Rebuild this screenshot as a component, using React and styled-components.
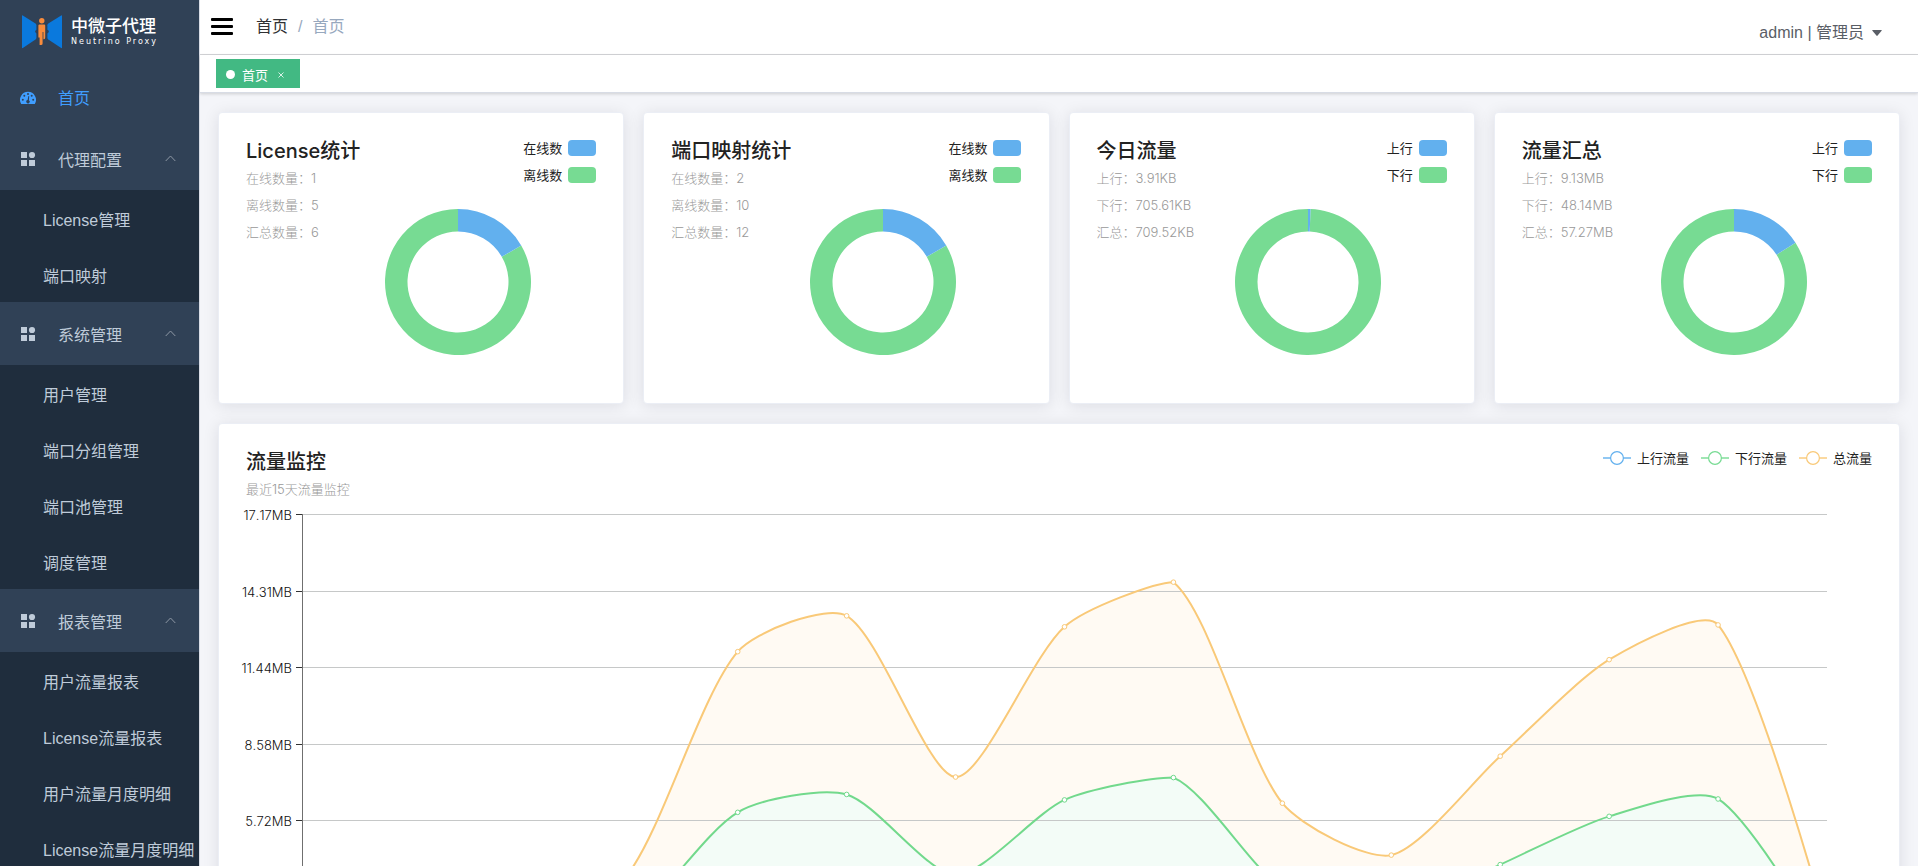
import React, { useLayoutEffect, useRef, useState } from 'react';
import styled, { createGlobalStyle } from 'styled-components';

const BLUE = '#62b0ee';
const GREEN = '#77db93';
const ORANGE = '#f9c978';

const uiFont = '"Liberation Sans", "Noto Sans CJK SC", sans-serif';
const chartFont = 'Inter, "Noto Sans CJK SC", sans-serif';

const GlobalStyle = createGlobalStyle`
  *, *::before, *::after { box-sizing: border-box; }
  body { margin: 0; font-family: ${uiFont}; font-size: 16px; background: #f4f5f9; }
  button { font: inherit; color: inherit; background: none; border: 0; padding: 0; cursor: pointer; }
  a { color: inherit; text-decoration: none; }
  ul, ol, h2, p { margin: 0; padding: 0; list-style: none; }
`;

/* ---------- shell ---------- */
const Shell = styled.div`
  display: flex;
  height: 100vh;
  overflow: hidden;
`;

const Sidebar = styled.nav`
  flex: 0 0 200px;
  overflow: hidden;
  background: #304156;
  border-right: 1px solid #d8dce5;
  color: #bfcbd9;
`;

const Main = styled.div`
  flex: 1;
  min-width: 0;
  display: flex;
  flex-direction: column;
`;

const Brand = styled.a`
  display: flex;
  align-items: center;
  gap: 9px;
  height: 64px;
  padding-left: 22px;
  color: #fff;
`;

const BrandText = styled.span`
  display: flex;
  flex-direction: column;
`;

const BrandName = styled.strong`
  font-size: 17px;
  line-height: 20px;
  font-weight: 500;
`;

const BrandSub = styled.small`
  font-family: "DejaVu Sans", sans-serif;
  font-size: 8px;
  line-height: 10px;
  letter-spacing: 2px;
  white-space: nowrap;
`;

const menuRow = `
  display: flex;
  align-items: center;
  width: 100%;
  white-space: nowrap;
  line-height: 24px;
`;

const MenuLink = styled.a`
  ${menuRow}
  height: 63px;
  padding: 6px 20px 0;
  gap: 22px;
  color: #409eff;
  svg { margin-bottom: 2px; }
`;

const MenuToggle = styled.button`
  ${menuRow}
  height: 63px;
  padding: 4px 23px 0 20px;
  gap: 22px;
  text-align: left;
  > span { flex: 1; }
  svg { margin-bottom: 4px; }
`;

const SubMenu = styled.ul`
  background: #1f2d3d;
`;

const SubLink = styled.a`
  ${menuRow}
  height: 56px;
  padding: 6px 0 0 43px;
`;

/* ---------- top bars ---------- */
const TopBar = styled.header`
  display: flex;
  align-items: center;
  flex: 0 0 55px;
  padding: 0 36px 0 11px;
  background: #fff;
  border-bottom: 1px solid #d4d5d8;
`;

const Hamburger = styled.button`
  display: flex;
  flex-direction: column;
  gap: 4px;
  width: 22px;
  margin-right: 23px;
  padding-bottom: 2px;
  > i { height: 3px; border-radius: 1px; background: #000; }
`;

const Crumbs = styled.ol`
  display: flex;
  gap: 10px;
  flex: 1;
  line-height: 24px;
  color: #97a8be;
  a { color: #303133; }
`;

const UserMenu = styled.button`
  display: flex;
  align-items: center;
  gap: 8px;
  padding-top: 12px;
  line-height: 24px;
  color: #5a5e66;
`;

const TagBar = styled.div`
  display: flex;
  align-items: center;
  flex: 0 0 38px;
  padding-left: 16px;
  background: #fff;
  border-bottom: 1px solid #d8dce5;
  box-shadow: 0 1px 3px rgba(0, 0, 0, 0.16);
  z-index: 1;
`;

const Tag = styled.div`
  display: flex;
  align-items: center;
  height: 29px;
  padding: 2px 16px 0 10px;
  background: #42b983;
  color: #fff;
  font-size: 13px;
  &::before {
    content: '';
    width: 9px;
    height: 9px;
    margin-right: 7px;
    border-radius: 50%;
    background: #fff;
  }
`;

const TagClose = styled.button`
  display: flex;
  margin-left: 10px;
`;

/* ---------- content ---------- */
const Content = styled.main`
  flex: 1;
  min-height: 0;
  overflow-y: auto;
  scrollbar-width: none;
  display: flex;
  flex-direction: column;
  gap: 19px;
  padding: 19px 18px;
`;

const CardGrid = styled.div`
  display: grid;
  grid-template-columns: repeat(4, minmax(0, 1fr));
  gap: 19px;
`;

const Card = styled.section`
  background: #fff;
  border: 1px solid #ebeef5;
  border-radius: 4px;
  box-shadow: 0 2px 16px rgba(20, 20, 40, 0.1);
  font-family: ${chartFont};
`;

const StatCard = styled(Card)`
  display: grid;
  grid-template-columns: minmax(0, 138fr) 146px minmax(0, 65fr);
  align-items: start;
  padding: 27px 27px 48px;
`;

const StatText = styled.div`
  grid-area: 1 / 1;
  white-space: nowrap;
`;

const CardTitle = styled.h2`
  margin-bottom: 3px;
  font-size: 20px;
  line-height: 22px;
  font-weight: 500;
  color: #222;
`;

const Note = styled.p`
  font-size: 13px;
  line-height: 27px;
  font-weight: 300;
  color: #999;
`;

const Legend = styled.ul`
  grid-area: 1 / 2 / 2 / 4;
  justify-self: end;
  display: flex;
  flex-direction: column;
  align-items: flex-end;
  gap: 11px;
  font-size: 13px;
  line-height: 16px;
  color: #222;
  li { display: flex; align-items: center; gap: 6px; }
`;

const Swatch = styled.i`
  width: 28px;
  height: 16px;
  border-radius: 4px;
  background: ${(p) => p.$color};
`;

const DonutSvg = styled.svg`
  grid-area: 1 / 2;
  display: block;
  width: 100%;
  margin-top: 69px;
`;

const TrendCard = styled(Card)`
  flex: none;
`;

const TrendHead = styled.div`
  display: flex;
  justify-content: space-between;
  align-items: flex-start;
  padding: 27px 27px 0;
`;

const LineLegend = styled.ul`
  display: flex;
  gap: 12px;
  font-size: 13px;
  line-height: 14px;
  color: #222;
  li { display: flex; align-items: center; gap: 6px; }
`;

const ChartBox = styled.div`
  svg { display: block; }
  text { font-size: 13px; fill: #111; font-weight: 300; font-kerning: none; }
`;

/* ---------- drawings ---------- */
const Logo = () => (
  <svg width="40" height="34" viewBox="0 0 40 34" aria-hidden="true">
    <path d="M0 .8Q0 0 .8 .4L13.5 8.6Q14.4 9.2 14.4 10.2V22.8Q14.4 24 13.5 24.6L.8 33Q0 33.4 0 32.6Z" fill="#0a79dd" />
    <path d="M40 .8Q40 0 39.2 .4L26.3 8.6Q25.4 9.2 25.4 10.2V22.8Q25.4 24 26.3 24.6L39.2 33Q40 33.4 40 32.6Z" fill="#0a79dd" />
    <circle cx="15" cy="16.6" r="1.8" fill="#304156" />
    <circle cx="25" cy="16.6" r="1.8" fill="#304156" />
    <circle cx="19.8" cy="5.7" r="2.7" fill="#f98c3c" />
    <path d="M17 9.6H22.2Q23.2 9.6 23.2 10.6V22.5Q23.2 24.2 22 24.2H21.4V17H20.6V28.5Q20.6 30 19 30H17.6V22.5H16.4V10.2Z" fill="#f98c3c" />
  </svg>
);

const GaugeIcon = () => (
  <svg width="16" height="14" viewBox="0 0 16 14" aria-hidden="true">
    <path d="M8 .8A8 8 0 0 0 1.2 13H14.8A8 8 0 0 0 8 .8Z" fill="#409eff" />
    <g fill="#304156">
      <circle cx="8" cy="3" r="1" />
      <circle cx="4.3" cy="4.8" r="1" />
      <circle cx="11.7" cy="4.8" r="1" />
      <circle cx="2.8" cy="8.8" r="1" />
      <circle cx="13.2" cy="8.8" r="1" />
      <path d="M8.4 5L9.2 5.2L8.9 9.2A1.7 1.7 0 1 1 7.6 9Z" />
    </g>
  </svg>
);

const BlocksIcon = () => (
  <svg width="16" height="16" viewBox="0 0 16 16" fill="currentColor" aria-hidden="true">
    <rect x="1" y="1" width="6" height="6" />
    <circle cx="12" cy="4" r="3.1" />
    <rect x="1" y="9" width="6" height="6" />
    <rect x="9" y="9" width="6" height="6" />
  </svg>
);

const ChevronUp = () => (
  <svg width="11" height="7" viewBox="0 0 11 7" fill="none" stroke="#8e98a5" aria-hidden="true">
    <path d="M.7 6L5.5 1L10.3 6" />
  </svg>
);

const polar = (r, a) => [73 + r * Math.sin(a), 73 - r * Math.cos(a)];

const ringPath = (from, to) => {
  const large = to - from > Math.PI ? 1 : 0;
  const [ax, ay] = polar(73, from);
  const [bx, by] = polar(73, to);
  const [cx, cy] = polar(50.5, to);
  const [dx, dy] = polar(50.5, from);
  return `M${ax} ${ay}A73 73 0 ${large} 1 ${bx} ${by}L${cx} ${cy}A50.5 50.5 0 ${large} 0 ${dx} ${dy}Z`;
};

const Donut = ({ share, label }) => {
  const split = share * Math.PI * 2;
  return (
    <DonutSvg viewBox="0 0 146 146" role="img" aria-label={label}>
      <path d={ringPath(split, Math.PI * 2)} fill={GREEN} />
      <path d={ringPath(0, split)} fill={BLUE} />
    </DonutSvg>
  );
};

/* ---------- trend chart ---------- */
const AXIS_LABELS = ['17.17MB', '14.31MB', '11.44MB', '8.58MB', '5.72MB'];
const INTERVALS = 6;
const MAX = 17.17;
const TOTAL = [0.2, 0.4, 0.9, 3.74, 12.02, 13.36, 7.33, 12.95, 14.62, 6.35, 4.41, 8.11, 11.72, 13.02, 1.7];
const DOWN = TOTAL.map((v) => v / 2);

const PLOT = { left: 83, right: 72, top: 11, height: 459, bottom: 40 };
const SMOOTH = 0.25;

const clamp = (v, a, b) => Math.min(Math.max(v, a), b);

/* Bezier smoothing whose control points stay inside the series' bounding box. */
const smoothPath = (pts) => {
  const ys = pts.map((p) => p[1]);
  const lo = Math.min(...ys);
  const hi = Math.max(...ys);
  const controls = pts.map((p, i) => {
    const prev = pts[i - 1];
    const next = pts[i + 1];
    if (!prev || !next) return [p, p];
    const a = Math.hypot(p[0] - prev[0], p[1] - prev[1]);
    const b = Math.hypot(next[0] - p[0], next[1] - p[1]);
    const ratio = b / (a + b);
    const vx = (next[0] - prev[0]) * SMOOTH;
    const vy = (next[1] - prev[1]) * SMOOTH;
    return [
      [p[0] - vx * (1 - ratio), clamp(p[1] - vy * (1 - ratio), lo, hi)],
      [p[0] + vx * ratio, clamp(p[1] + vy * ratio, lo, hi)],
    ];
  });
  return pts.slice(1).reduce((d, p, i) => `${d}C${controls[i][1]} ${controls[i + 1][0]} ${p}`, `M${pts[0]}`);
};

const TrendChart = () => {
  const box = useRef(null);
  const [width, setWidth] = useState(1200);

  useLayoutEffect(() => {
    const measure = () => setWidth(box.current.clientWidth);
    measure();
    const observer = new ResizeObserver(measure);
    observer.observe(box.current);
    return () => observer.disconnect();
  }, []);

  const x0 = PLOT.left;
  const x1 = width - PLOT.right;
  const base = PLOT.top + PLOT.height;
  const toPoints = (data) =>
    data.map((v, i) => [x0 + ((x1 - x0) * i) / (data.length - 1), base - (v / MAX) * PLOT.height]);
  const series = [
    { key: 'total', pts: toPoints(TOTAL), line: ORANGE, fill: '#fffaf3' },
    { key: 'down', pts: toPoints(DOWN), line: '#72d98c', fill: '#f3fcf7' },
  ];
  const gridY = Array.from({ length: INTERVALS + 1 }, (_, i) =>
    Math.round(PLOT.top + (PLOT.height * i) / INTERVALS) + 0.5);

  return (
    <ChartBox ref={box}>
      <svg width={width} height={base + PLOT.bottom} role="img" aria-label="流量监控">
        {series.map((s) => (
          <path key={s.key} d={`${smoothPath(s.pts)}L${x1} ${base}L${x0} ${base}Z`} fill={s.fill} />
        ))}
        {gridY.map((y, i) => (
          <g key={y}>
            <path d={`M${x0} ${y}H${x1}`} stroke="#c6c8c8" />
            <path d={`M${x0 - 6} ${y}H${x0}`} stroke="#333" />
            {AXIS_LABELS[i] && <text x={x0 - 10} y={y + 5} textAnchor="end">{AXIS_LABELS[i]}</text>}
          </g>
        ))}
        <path d={`M${x0 + 0.5} ${PLOT.top}V${base}`} stroke="#6f6f6f" />
        {series.map((s) => (
          <g key={s.key} stroke={s.line}>
            <path d={smoothPath(s.pts)} fill="none" strokeWidth="2" />
            {s.pts.map((p) => (
              <circle key={p[0]} cx={p[0]} cy={p[1]} r="2.3" fill="#fff" />
            ))}
          </g>
        ))}
      </svg>
    </ChartBox>
  );
};

/* ---------- data ---------- */
const MENUS = [
  { title: '代理配置', items: ['License管理', '端口映射'] },
  { title: '系统管理', items: ['用户管理', '端口分组管理', '端口池管理', '调度管理'] },
  { title: '报表管理', items: ['用户流量报表', 'License流量报表', '用户流量月度明细', 'License流量月度明细'] },
];

const STATS = [
  { title: 'License统计', notes: ['在线数量：1', '离线数量：5', '汇总数量：6'], legend: ['在线数', '离线数'], share: 1 / 6 },
  { title: '端口映射统计', notes: ['在线数量：2', '离线数量：10', '汇总数量：12'], legend: ['在线数', '离线数'], share: 2 / 12 },
  { title: '今日流量', notes: ['上行：3.91KB', '下行：705.61KB', '汇总：709.52KB'], legend: ['上行', '下行'], share: 3.91 / 709.52 },
  { title: '流量汇总', notes: ['上行：9.13MB', '下行：48.14MB', '汇总：57.27MB'], legend: ['上行', '下行'], share: 9.13 / 57.27 },
];

const LINES = [
  ['上行流量', BLUE],
  ['下行流量', GREEN],
  ['总流量', ORANGE],
];

export default function App() {
  return (
    <>
      <GlobalStyle />
      <Shell>
        <Sidebar>
          <Brand href="#home">
            <Logo />
            <BrandText>
              <BrandName>中微子代理</BrandName>
              <BrandSub>Neutrino Proxy</BrandSub>
            </BrandText>
          </Brand>
          <MenuLink href="#home"><GaugeIcon />首页</MenuLink>
          {MENUS.map((menu) => (
            <div key={menu.title}>
              <MenuToggle type="button" aria-expanded="true">
                <BlocksIcon />
                <span>{menu.title}</span>
                <ChevronUp />
              </MenuToggle>
              <SubMenu>
                {menu.items.map((item) => (
                  <li key={item}><SubLink href={`#${item}`}>{item}</SubLink></li>
                ))}
              </SubMenu>
            </div>
          ))}
        </Sidebar>
        <Main>
          <TopBar>
            <Hamburger type="button" aria-label="菜单"><i /><i /><i /></Hamburger>
            <Crumbs>
              <li><a href="#home">首页</a></li>
              <li aria-hidden="true">/</li>
              <li>首页</li>
            </Crumbs>
            <UserMenu type="button">
              admin | 管理员
              <svg width="10" height="6" viewBox="0 0 10 6" fill="currentColor" aria-hidden="true">
                <path d="M.6 0H9.4Q10 .2 9.6 .8L5.6 5.6Q5 6.2 4.4 5.6L.4 .8Q0 .2 .6 0Z" />
              </svg>
            </UserMenu>
          </TopBar>
          <TagBar>
            <Tag>
              首页
              <TagClose type="button" aria-label="关闭">
                <svg width="6" height="6" viewBox="0 0 6 6" stroke="#fff" strokeWidth=".8" aria-hidden="true">
                  <path d="M.5 .5L5.5 5.5M5.5 .5L.5 5.5" />
                </svg>
              </TagClose>
            </Tag>
          </TagBar>
          <Content>
            <CardGrid>
              {STATS.map((s) => (
                <StatCard key={s.title}>
                  <StatText>
                    <CardTitle>{s.title}</CardTitle>
                    {s.notes.map((n) => <Note key={n}>{n}</Note>)}
                  </StatText>
                  <Donut share={s.share} label={s.title} />
                  <Legend>
                    <li>{s.legend[0]}<Swatch $color={BLUE} /></li>
                    <li>{s.legend[1]}<Swatch $color={GREEN} /></li>
                  </Legend>
                </StatCard>
              ))}
            </CardGrid>
            <TrendCard>
              <TrendHead>
                <div>
                  <CardTitle>流量监控</CardTitle>
                  <Note>最近15天流量监控</Note>
                </div>
                <LineLegend>
                  {LINES.map(([name, color]) => (
                    <li key={name}>
                      <svg width="28" height="14" viewBox="0 0 28 14" fill="#fff" stroke={color} aria-hidden="true">
                        <path d="M0 7H28" strokeWidth="1.4" />
                        <circle cx="14" cy="7" r="6.4" strokeWidth="1.2" />
                      </svg>
                      {name}
                    </li>
                  ))}
                </LineLegend>
              </TrendHead>
              <TrendChart />
            </TrendCard>
          </Content>
        </Main>
      </Shell>
    </>
  );
}
